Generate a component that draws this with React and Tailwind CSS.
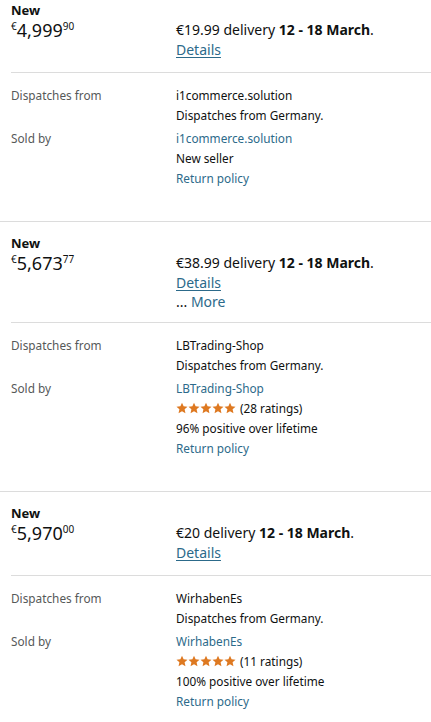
import React from "react";

const offers = [
  {
    whole: "4,999",
    frac: "90",
    delivery: "€19.99",
    more: false,
    dispatcher: "i1commerce.solution",
    seller: "i1commerce.solution",
    ratings: null,
    positive: null,
  },
  {
    whole: "5,673",
    frac: "77",
    delivery: "€38.99",
    more: true,
    dispatcher: "LBTrading-Shop",
    seller: "LBTrading-Shop",
    ratings: "(28 ratings)",
    positive: "96% positive over lifetime",
  },
  {
    whole: "5,970",
    frac: "00",
    delivery: "€20",
    more: false,
    dispatcher: "WirhabenEs",
    seller: "WirhabenEs",
    ratings: "(11 ratings)",
    positive: "100% positive over lifetime",
  },
];

const Star = () => (
  <svg viewBox="0 0 24 24" className="w-[12px] h-[12px]" fill="#de7921">
    <path d="M12 1.5l3.2 7.1 7.8.8-5.8 5.2 1.7 7.7L12 18.3l-6.9 4 1.7-7.7L1 9.4l7.8-.8z" />
  </svg>
);

const Offer = ({ offer, first }) => {
  return (
    <div className={first ? "" : "border-t border-[#dcdcdc] pt-[11px]"}>
      <div className="px-[11px]">
        <div className="font-bold text-[13px] leading-[20px] text-[#0f1111]">New</div>
        <div className="flex">
          <div className="w-[165px] shrink-0 flex items-start text-[#0f1111] leading-[20px]">
            <span className="text-[10px] leading-[13px]">€</span>
            <span className="text-[18px] leading-[20px]">{offer.whole}</span>
            <span className="text-[10px] leading-[13px]">{offer.frac}</span>
          </div>
          <div className="text-[14px] text-[#0f1111]">
            <div className="leading-[20px]">
              {offer.delivery} delivery <span className="font-bold">12 - 18 March</span>.
            </div>
            <div className="leading-[20px]">
              <span className="text-[#2c6a8a] underline underline-offset-2">Details</span>
            </div>
            {offer.more && (
              <div className="leading-[17px] text-[#2c6a8a]">
                <span className="text-[#0f1111]">...</span> More
              </div>
            )}
          </div>
        </div>
      </div>
      <div className="ml-[11px] mt-3 border-t border-[#dcdcdc] pt-3 pb-[33px] text-[11.8px] leading-[20px]">
        <div className="flex">
          <div className="w-[165px] shrink-0 text-[#565959]">Dispatches from</div>
          <div className="text-[#0f1111]">
            <div>{offer.dispatcher}</div>
            <div>Dispatches from Germany.</div>
          </div>
        </div>
        <div className="flex mt-[3px]">
          <div className="w-[165px] shrink-0 text-[#565959]">Sold by</div>
          <div className="text-[#0f1111]">
            <div className="text-[#2c6a8a]">{offer.seller}</div>
            {offer.ratings ? (
              <>
                <div className="flex items-center gap-[4px]">
                  <span className="flex">
                    <Star />
                    <Star />
                    <Star />
                    <Star />
                    <Star />
                  </span>
                  <span>{offer.ratings}</span>
                </div>
                <div>{offer.positive}</div>
              </>
            ) : (
              <div>New seller</div>
            )}
            <div className="text-[#2c6a8a]">Return policy</div>
          </div>
        </div>
      </div>
    </div>
  );
};

export default function App() {
  return (
    <div className="w-[431px] h-[722px] overflow-hidden bg-white font-['Noto_Sans',sans-serif]">
      {offers.map((offer, i) => (
        <Offer key={i} offer={offer} first={i === 0} />
      ))}
    </div>
  );
}
